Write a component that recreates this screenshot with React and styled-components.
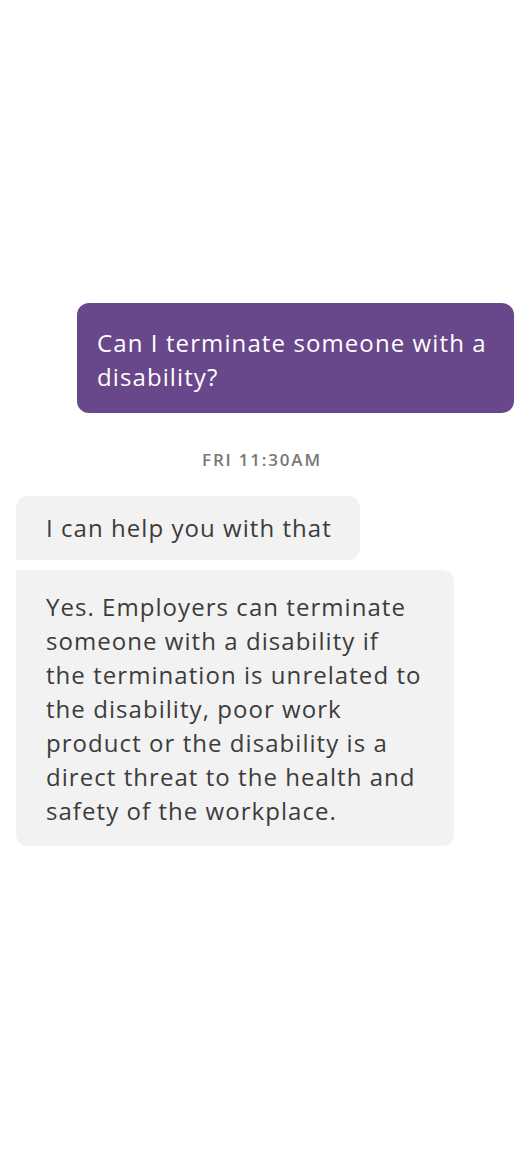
import React from "react";
import styled, { createGlobalStyle } from "styled-components";

const GlobalStyle = createGlobalStyle`
  body {
    margin: 0;
    background: #fff;
    font-family: "Open Sans", "Liberation Sans", sans-serif;
  }
`;

const Thread = styled.div`
  display: flex;
  flex-direction: column;
  padding: 303px 18px 0 16px;
  min-height: 1154px;
  box-sizing: border-box;
`;

const Outgoing = styled.div`
  align-self: flex-end;
  max-width: 437px;
  box-sizing: border-box;
  background: #68488a;
  color: #fff;
  border-radius: 12px;
  padding: 23px 18px 19px 20px;
  font-size: 24px;
  line-height: 34px;
  letter-spacing: 1.1px;
`;

const Stamp = styled.div`
  margin: 37px 0 26px;
  text-align: center;
  font-size: 17px;
  line-height: 20px;
  font-weight: 600;
  letter-spacing: 1.8px;
  color: #777;
  padding-right: 6px;
`;

const Group = styled.div`
  display: flex;
  flex-direction: column;
  align-items: flex-start;
  gap: 10px;
`;

const Incoming = styled.div`
  max-width: 438px;
  box-sizing: border-box;
  background: #f2f2f2;
  color: #3c3c3c;
  padding: ${p => (p.$first ? "15px 28px 15px 30px" : "20px 30px 18px")};
  font-size: 24px;
  line-height: 34px;
  letter-spacing: 1.05px;
  border-radius: ${p => (p.$first ? "12px 12px 12px 0" : "0 12px 12px 12px")};
`;

export default function App() {
  return (
    <>
      <GlobalStyle />
      <Thread>
        <Outgoing>Can I terminate someone with a disability?</Outgoing>
        <Stamp>FRI 11:30AM</Stamp>
        <Group>
          <Incoming $first>I can help you with that</Incoming>
          <Incoming>
            Yes. Employers can terminate someone with a disability if the
            termination is unrelated to the disability, poor work product or
            the disability is a direct threat to the health and safety of the
            workplace.
          </Incoming>
        </Group>
      </Thread>
    </>
  );
}
